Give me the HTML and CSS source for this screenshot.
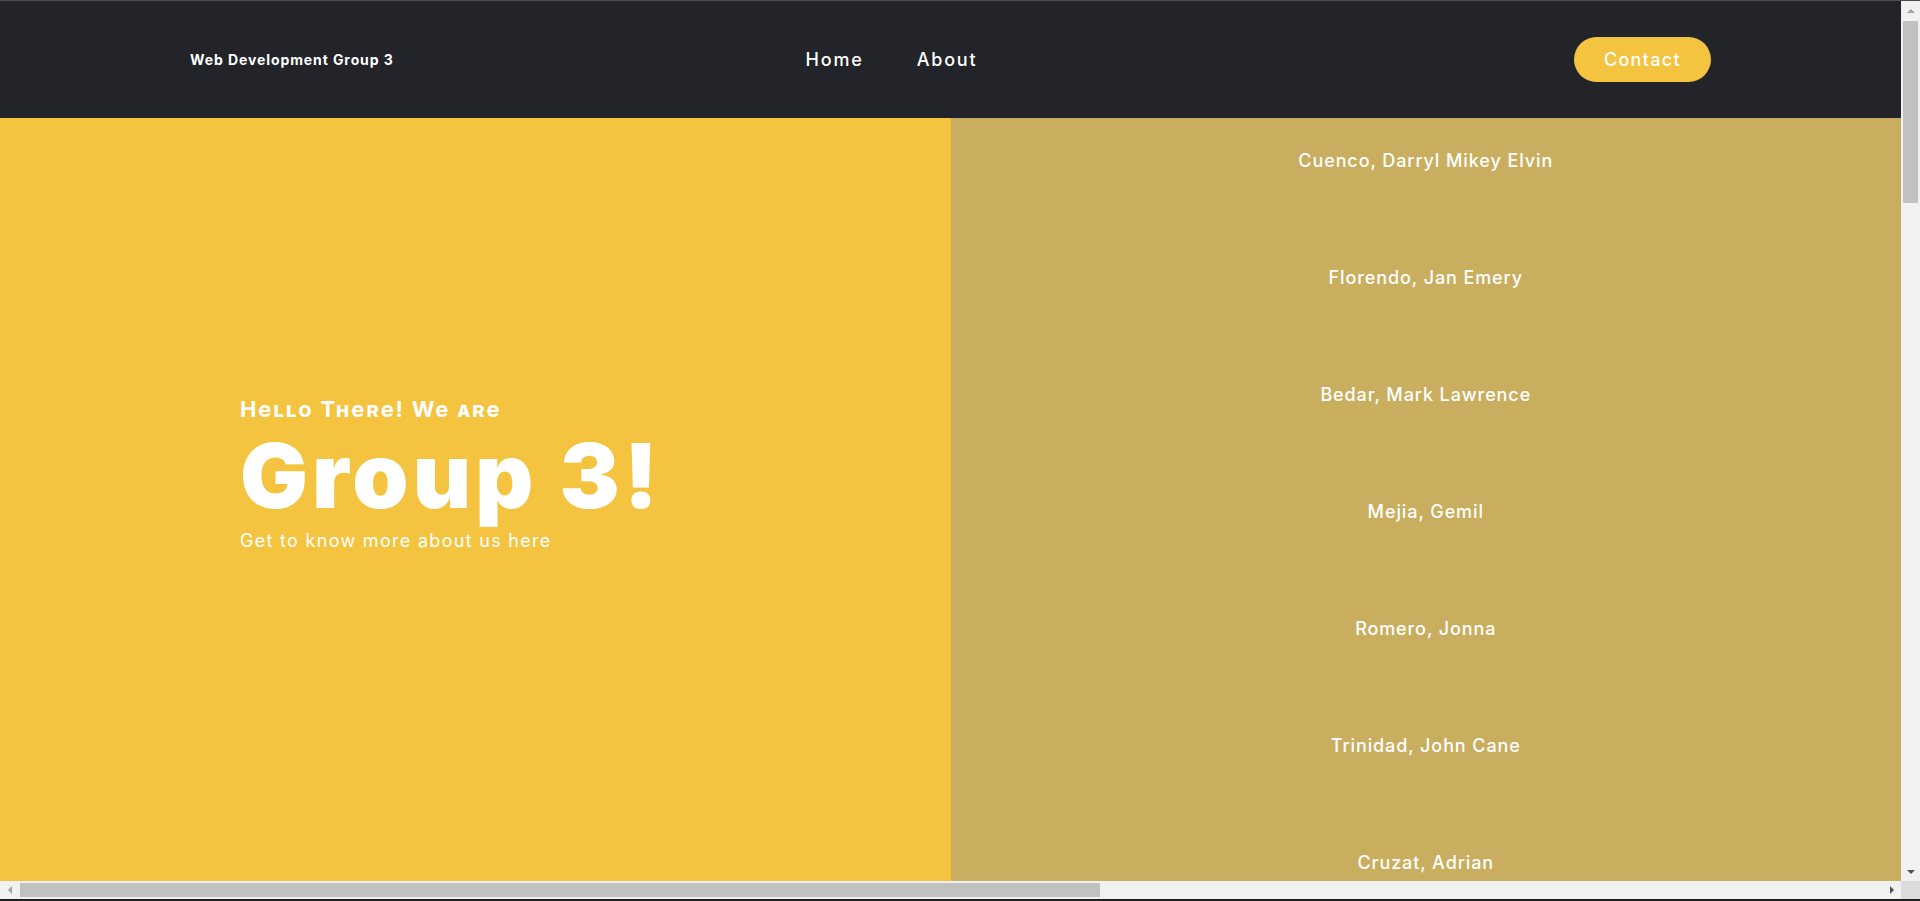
FILE: index.html
```
<!DOCTYPE html>
<html lang="en">
<head>
<meta charset="utf-8">
<title>Web Development Group 3</title>
<link rel="stylesheet" href="styles.css">
</head>
<body>
<div class="window">
  <div class="viewport">
    <header class="site-header">
      <div class="logo">Web Development Group 3</div>
      <nav class="main-nav">
        <a href="#" class="nav-link">Home</a>
        <a href="#" class="nav-link">About</a>
      </nav>
      <a href="#" class="contact-btn">Contact</a>
    </header>
    <main class="hero">
      <section class="hero-left">
        <div class="intro">
          <h3 class="intro-kicker">Hello There! We are</h3>
          <h1 class="intro-title">Group 3!</h1>
          <p class="intro-sub">Get to know more about us here</p>
        </div>
      </section>
      <section class="hero-right">
        <ul class="members">
          <li class="member">Cuenco, Darryl Mikey Elvin</li>
          <li class="member">Florendo, Jan Emery</li>
          <li class="member">Bedar, Mark Lawrence</li>
          <li class="member">Mejia, Gemil</li>
          <li class="member">Romero, Jonna</li>
          <li class="member">Trinidad, John Cane</li>
          <li class="member">Cruzat, Adrian</li>
        </ul>
      </section>
    </main>
  </div>
  <div class="vscroll">
    <div class="sb-btn"><span class="arrow arrow-up"></span></div>
    <div class="vtrack"><div class="vthumb"></div></div>
    <div class="sb-btn"><span class="arrow arrow-down"></span></div>
  </div>
  <div class="hscroll">
    <div class="sb-btn-h"><span class="arrow arrow-left"></span></div>
    <div class="htrack"><div class="hthumb"></div></div>
    <div class="sb-btn-h"><span class="arrow arrow-right"></span></div>
  </div>
  <div class="corner"></div>
</div>
</body>
</html>
```
FILE: styles.css
```
* { box-sizing: border-box; }
html, body { margin: 0; padding: 0; }
body {
  font-family: Inter, "Open Sans", sans-serif;
  color: #fff;
  background: #1e1e1e;
  overflow: hidden;
}
a { color: inherit; text-decoration: none; }

.window {
  height: 901px;
  border-top: 1px solid #4b4c50;
  border-bottom: 2px solid #1e1e1e;
  display: grid;
  grid-template-columns: 1fr 19px;
  grid-template-rows: 1fr 18px;
}
.viewport {
  overflow: hidden;
  background: #f4c441;
}

/* scrollbars */
.vscroll, .hscroll { background: #f1f1f1; }
.corner { background: #dcdcdc; }
.vscroll {
  display: flex;
  flex-direction: column;
}
.sb-btn {
  height: 19px;
  display: flex;
  align-items: center;
  justify-content: center;
}
.vtrack {
  flex: 1;
  padding: 1px 2px 0 2px;
}
.vthumb {
  height: 182px;
  background: #c1c1c1;
}
.hscroll {
  display: flex;
}
.sb-btn-h {
  width: 19px;
  display: flex;
  align-items: center;
  justify-content: center;
}
.htrack {
  flex: 1;
  padding: 2px 0 2px 1px;
}
.hthumb {
  width: 1080px;
  height: 100%;
  background: #c1c1c1;
}
.arrow {
  width: 0;
  height: 0;
  border-style: solid;
}
.arrow-up {
  border-width: 0 4px 4px 4px;
  border-color: transparent transparent #a3a3a3 transparent;
}
.arrow-down {
  border-width: 4px 4px 0 4px;
  border-color: #505050 transparent transparent transparent;
}
.arrow-left {
  border-width: 4px 4px 4px 0;
  border-color: transparent #a3a3a3 transparent transparent;
}
.arrow-right {
  border-width: 4px 0 4px 4px;
  border-color: transparent transparent transparent #505050;
}

/* header */
.site-header {
  height: 117px;
  background: #232429;
  display: flex;
  align-items: center;
  padding: 0 10%;
}
.logo {
  font-size: 14px;
  font-weight: 700;
  letter-spacing: 0.9px;
}
.main-nav {
  display: flex;
  gap: 53px;
  margin-left: 412px;
}
.nav-link {
  font-size: 18px;
  font-weight: 500;
  letter-spacing: 1.8px;
}
.contact-btn {
  margin-left: auto;
  width: 137px;
  height: 45px;
  border-radius: 23px;
  background: #f4c441;
  display: flex;
  align-items: center;
  justify-content: center;
  font-size: 18px;
  font-weight: 500;
  letter-spacing: 1.3px;
}

/* hero */
.hero {
  display: grid;
  grid-template-columns: 1fr 1fr;
  min-height: 4282px;
}
.hero-left {
  background: #f4c441;
  padding: 277px 0 0 240px;
}
.intro-kicker {
  margin: 0;
  font-size: 22px;
  line-height: 28px;
  font-weight: 700;
  font-variant: small-caps;
  letter-spacing: 1.8px;
}
.intro-title {
  margin: 3px 0 0;
  font-size: 90px;
  line-height: 100px;
  font-weight: 900;
  letter-spacing: 4.1px;
}
.intro-sub {
  margin: 3px 0 0;
  font-size: 18px;
  line-height: 24px;
  font-weight: 400;
  letter-spacing: 1.3px;
}
.hero-right {
  background: #c9ae5f;
}
.members {
  list-style: none;
  margin: 0;
  padding: 31px 0 0;
  display: flex;
  flex-direction: column;
  gap: 93px;
  text-align: center;
}
.member {
  font-size: 18px;
  font-weight: 500;
  line-height: 24px;
  letter-spacing: 0.9px;
}
```
